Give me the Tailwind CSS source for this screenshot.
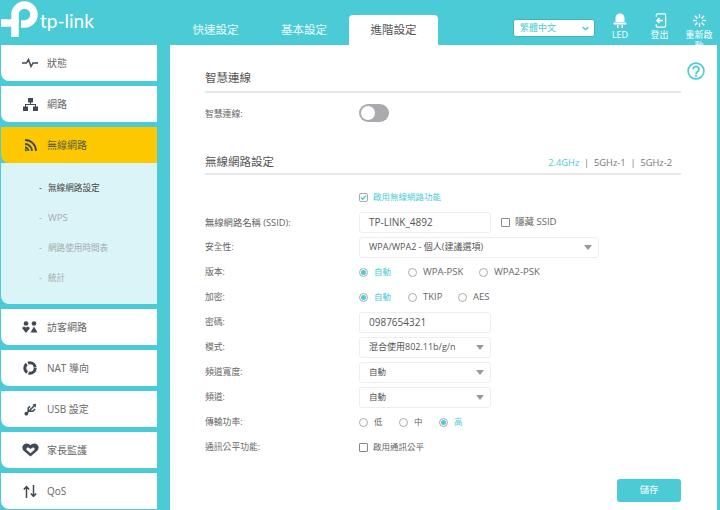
<!DOCTYPE html>
<html lang="zh-Hant">
<head>
  <meta charset="UTF-8"/>
  <title>TP-Link</title>
  <script src="https://cdn.jsdelivr.net/npm/@tailwindcss/browser@4"></script>
</head>
<body class="w-[720px] h-[510px] overflow-hidden bg-[#4acbd6] text-[#666] font-['Open_Sans','Noto_Sans_CJK_TC',sans-serif] text-[8.8px]">
  <!-- top bar -->
  <header class="h-[45px] flex relative">
    <div class="w-[172px] flex items-start pt-[1px] pl-[1px] text-white">
      <svg viewBox="0 0 38 37" class="w-[38px] h-[37px] shrink-0" fill="none" stroke="#fff" stroke-width="7.5">
        <path d="M0 22H14V36"/>
        <path d="M14 22V13.5A9.500 9.500 0 1 1 23.500 23H20"/>
      </svg>
      <span class="ml-[1px] mt-[8px] text-[19px] leading-[24px] font-['Lato',sans-serif]">tp-link</span>
    </div>
    <nav class="flex items-end text-[11.500px]">
      <a class="w-[87px] h-[30px] flex items-center justify-center text-white/90">快速設定</a>
      <a class="w-[90px] h-[30px] flex items-center justify-center text-white/90">基本設定</a>
      <a class="w-[89px] h-[30px] flex items-center justify-center bg-white rounded-t-[4px] text-[#555]">進階設定</a>
    </nav>
    <div class="ml-[75px] mt-[19px] w-[82px] h-[18px] bg-white rounded-[3px] border border-[#3fb4bf] flex items-center justify-between pl-[6px] pr-[5px] text-[#4acbd6] text-[9px]">
      繁體中文
      <svg viewBox="0 0 10 6" class="w-[7px] h-[5px]" fill="none" stroke="#4acbd6" stroke-width="2"><path d="M1 1l4 3.500L9 1"/></svg>
    </div>
    <div class="flex ml-[5px] text-white text-[9px] leading-[11px] text-center">
      <div class="w-[40px] flex flex-col items-center pt-[12px]">
        <svg viewBox="0 0 14 16" class="w-[14px] h-[16px] shrink-0" fill="#fff"><path d="M2.500 10V6a4.500 4.500 0 0 1 9 0v4zM0.500 10.500h13v2h-13zM4 13h1.500v3H4zM8.500 13H10v3H8.500z"/></svg>
        <span class="mt-[1px]">LED</span>
      </div>
      <div class="w-[39px] flex flex-col items-center pt-[13px]">
        <svg viewBox="0 0 14 16" class="w-[14px] h-[15px] shrink-0" fill="none" stroke="#fff" stroke-width="1.400"><path d="M3 4V2.500A1.500 1.500 0 0 1 4.500 1h7.500A1.500 1.500 0 0 1 13 2.500v11a1.500 1.500 0 0 1-1.500 1.500H4.500A1.500 1.500 0 0 1 3 13.500V12"/><path d="M10 8H4M6.500 5.500L4 8l2.500 2.500" stroke-width="1.800"/></svg>
        <span class="mt-[1px]">登出</span>
      </div>
      <div class="w-[40px] flex flex-col items-center pt-[13px]">
        <svg viewBox="0 0 16 16" class="w-[15px] h-[15px] shrink-0" fill="none" stroke="#fff" stroke-width="1.500"><path d="M8 1v4M8 11v4M1 8h4M11 8h4M3 3l2.800 2.800M10.200 10.200L13 13M13 3l-2.800 2.800M5.800 10.200L3 13"/></svg>
        <span class="mt-[1px] w-[28px]">重新啟動</span>
      </div>
    </div>
  </header>

  <div class="flex h-[465px] relative">
    <!-- side menu -->
    <aside class="w-[170px] pl-[1px] flex flex-col gap-[5px] text-[10px]">
      <a class="w-[156px] h-[36px] shrink-0 bg-white rounded-bl-[8px] flex items-center">
        <svg viewBox="0 0 16 10" class="w-[16px] h-[10px] ml-[21px] mr-[9px]" fill="none" stroke="#414a52" stroke-width="1.500"><path d="M0 5h4.500l2-3.500 2.500 7 2-3.500H16"/></svg>狀態
      </a>
      <a class="w-[156px] h-[36px] shrink-0 bg-white rounded-bl-[8px] flex items-center">
        <svg viewBox="0 0 15 13" class="w-[15px] h-[13px] ml-[22px] mr-[9px]" fill="#414a52"><path d="M5 0h5v4.500H5zM0 8.500h5V13H0zM10 8.500h5V13h-5z"/><path d="M7 4h1v2h5v3h-1V7H3v2H2V6h5z"/></svg>網路
      </a>
      <div class="w-[156px] shrink-0">
        <a class="h-[36px] bg-[#fdc800] rounded-bl-[8px] flex items-center text-[#5b5b45]">
          <svg viewBox="0 0 13 13" class="w-[13px] h-[13px] ml-[23px] mr-[10px]" fill="none" stroke="#414a52" stroke-width="1.800"><path d="M1 1a11 11 0 0 1 11 11M1 5a7 7 0 0 1 7 7"/><path d="M1 8.500a3.500 3.500 0 0 1 3.500 3.500"/><circle cx="1.800" cy="11.200" r="1" fill="#414a52" stroke="none"/></svg>無線網路
        </a>
        <ul class="h-[141px] bg-[#dbf4f7] rounded-bl-[8px] pt-[10px] pl-[38px] text-[8.600px] text-[#a3adb0]">
          <li class="h-[30px] flex items-center text-[#444]"><span class="w-[9px]">-</span>無線網路設定</li>
          <li class="h-[30px] flex items-center text-[9.500px]"><span class="w-[9px]">-</span>WPS</li>
          <li class="h-[30px] flex items-center"><span class="w-[9px]">-</span>網路使用時間表</li>
          <li class="h-[30px] flex items-center"><span class="w-[9px]">-</span>統計</li>
        </ul>
      </div>
      <a class="w-[156px] h-[36px] shrink-0 bg-white rounded-bl-[8px] flex items-center">
        <svg viewBox="0 0 16 12" class="w-[16px] h-[12px] ml-[21px] mr-[9px]" fill="#414a52"><circle cx="4" cy="2.500" r="2.300"/><circle cx="12" cy="2.500" r="2.300"/><path d="M0 7l2-1.500 2 1 2-1 2 1.500-4 5zM8.500 11.500L12 5.500l3.500 6z"/></svg>訪客網路
      </a>
      <a class="w-[156px] h-[36px] shrink-0 bg-white rounded-bl-[8px] flex items-center">
        <svg viewBox="0 0 14 14" class="w-[14px] h-[14px] ml-[22px] mr-[10px]" fill="none" stroke="#414a52" stroke-width="3"><circle cx="7" cy="7" r="5.200" stroke-dasharray="9.500 1.400"/></svg>NAT 導向
      </a>
      <a class="w-[156px] h-[36px] shrink-0 bg-white rounded-bl-[8px] flex items-center">
        <svg viewBox="0 0 14 14" class="w-[13px] h-[13px] ml-[23px] mr-[10px]" fill="none" stroke="#414a52" stroke-width="1.600"><path d="M2 12L11 3M5 9H9.500L12 6.500M4.500 9.500V5.500L6.500 3.500"/><circle cx="2.500" cy="11.500" r="2" fill="#414a52" stroke="none"/><path d="M9 1.500L13 .8 12.500 5z" fill="#414a52" stroke="none"/></svg>USB 設定
      </a>
      <a class="w-[156px] h-[36px] shrink-0 bg-white rounded-bl-[8px] flex items-center">
        <svg viewBox="0 0 18 14" class="w-[17px] h-[14px] ml-[21px] mr-[8px]" fill="#414a52"><path fill-rule="evenodd" d="M9 14L1.500 7.500C-1.500 3.500 2 0 5 0c1.500 0 3 .8 4 2 1-1.200 2.500-2 4-2 3 0 6.500 3.500 3.500 7.500zM9 10.500l4-3.500c1-1.500-.5-3-2-2.500L9 6 7 4.500c-1.500-.5-3 1-2 2.500z"/></svg>家長監護
      </a>
      <a class="w-[156px] h-[36px] shrink-0 bg-white rounded-bl-[8px] flex items-center">
        <svg viewBox="0 0 14 13" class="w-[14px] h-[13px] ml-[22px] mr-[10px]" fill="none" stroke="#414a52" stroke-width="1.500"><path d="M3.500 13V2M.8 4.500l2.700-3 2.700 3M10.500 0v11M7.800 8.500l2.700 3 2.700-3"/></svg>QoS
      </a>
    </aside>

    <!-- main panel -->
    <main class="w-[547px] h-[465px] bg-white pl-[35px] pr-[36px] relative z-10">
      <svg viewBox="0 0 20 20" class="absolute right-[12px] top-[17px] w-[18px] h-[18px]" fill="none" stroke="#4acbd6" stroke-width="1.800"><circle cx="10" cy="10" r="8.800"/><path d="M6.800 8a3.200 3.200 0 1 1 4.800 2.800c-1 .6-1.600 1.200-1.600 2.400" stroke-width="2"/><circle cx="10" cy="15.500" r="1.200" fill="#4acbd6" stroke="none"/></svg>

      <h2 class="h-[48px] pt-[25px] border-b-2 border-[#e8e8e8] text-[11.500px] leading-[16px] text-[#555]">智慧連線</h2>
      <div class="h-[42px] flex items-center">
        <label class="w-[154px] pt-[2px]">智慧連線:</label>
        <span class="w-[30px] h-[18px] rounded-full bg-[#ababaf] p-[2px] mt-[-2px]"><span class="block w-[14px] h-[14px] rounded-full bg-white"></span></span>
      </div>

      <div class="h-[40px] pt-[19px] border-b-2 border-[#e8e8e8] flex justify-between text-[#777]">
        <h2 class="text-[11.500px] leading-[16px] text-[#555]">無線網路設定</h2>
        <p class="leading-[16px] pt-[1px] pr-[9px] text-[9.300px] whitespace-pre"><span class="text-[#4acbd6]">2.4GHz</span>  |  5GHz-1  |  5GHz-2</p>
      </div>

      <div class="flex flex-col">
        <div class="h-[34.500px] pt-[10px] pl-[154px] flex items-center text-[#4acbd6] text-[8.500px]">
          <span class="w-[9px] h-[9px] rounded-[2px] border border-[#aaa] mr-[5px] flex items-center justify-center"><svg viewBox="0 0 8 8" class="w-[7px] h-[7px]" fill="none" stroke="#4acbd6" stroke-width="1.500"><path d="M1 4l2 2 4-4"/></svg></span>啟用無線網路功能
        </div>
        <div class="h-[25px] flex items-center">
          <label class="w-[154px] pt-[2px] text-[9.300px]">無線網路名稱 (SSID):</label>
          <span class="w-[132px] h-[21px] border border-[#eee] rounded-[3px] pl-[9px] flex items-center text-[#555] text-[10px]">TP-LINK_4892</span>
          <span class="w-[9px] h-[9px] rounded-[1px] border border-[#888] ml-[10px] mr-[5px]"></span><span class="text-[9.500px]">隱藏 SSID</span>
        </div>
        <div class="h-[25px] flex items-center">
          <label class="w-[154px] pt-[2px]">安全性:</label>
          <span class="w-[240px] h-[21px] border border-[#eee] rounded-[3px] pl-[9px] pr-[6px] flex items-center justify-between text-[#555] text-[9px]">WPA/WPA2 - 個人(建議選項)<i class="border-x-[4px] border-t-[5px] border-x-transparent border-t-[#999]"></i></span>
        </div>
        <div class="h-[25px] flex items-center">
          <label class="w-[154px] pt-[2px]">版本:</label>
          <span class="w-[9px] h-[9px] rounded-full border border-[#aaa] p-[1px] mr-[6px]"><i class="block w-full h-full rounded-full bg-[#4acbd6]"></i></span><span class="w-[34px] text-[#4acbd6] text-[8.500px]">自動</span>
          <span class="w-[9px] h-[9px] rounded-full border border-[#aaa] mr-[6px]"></span><span class="w-[56px] text-[9.500px]">WPA-PSK</span>
          <span class="w-[9px] h-[9px] rounded-full border border-[#aaa] mr-[6px]"></span><span class="text-[9.500px]">WPA2-PSK</span>
        </div>
        <div class="h-[25px] flex items-center">
          <label class="w-[154px] pt-[2px]">加密:</label>
          <span class="w-[9px] h-[9px] rounded-full border border-[#aaa] p-[1px] mr-[6px]"><i class="block w-full h-full rounded-full bg-[#4acbd6]"></i></span><span class="w-[34px] text-[#4acbd6] text-[8.500px]">自動</span>
          <span class="w-[9px] h-[9px] rounded-full border border-[#aaa] mr-[6px]"></span><span class="w-[35px] text-[9.500px]">TKIP</span>
          <span class="w-[9px] h-[9px] rounded-full border border-[#aaa] mr-[6px]"></span><span class="text-[9.500px]">AES</span>
        </div>
        <div class="h-[25px] flex items-center">
          <label class="w-[154px] pt-[2px]">密碼:</label>
          <span class="w-[132px] h-[21px] border border-[#eee] rounded-[3px] pl-[9px] flex items-center text-[#555] text-[10px]">0987654321</span>
        </div>
        <div class="h-[25px] flex items-center">
          <label class="w-[154px] pt-[2px]">模式:</label>
          <span class="w-[132px] h-[21px] border border-[#eee] rounded-[3px] pl-[9px] pr-[6px] flex items-center justify-between text-[#555] text-[9px]">混合使用802.11b/g/n<i class="border-x-[4px] border-t-[5px] border-x-transparent border-t-[#999]"></i></span>
        </div>
        <div class="h-[25px] flex items-center">
          <label class="w-[154px] pt-[2px]">頻道寬度:</label>
          <span class="w-[132px] h-[21px] border border-[#eee] rounded-[3px] pl-[9px] pr-[6px] flex items-center justify-between text-[#555] text-[8.500px]">自動<i class="border-x-[4px] border-t-[5px] border-x-transparent border-t-[#999]"></i></span>
        </div>
        <div class="h-[25px] flex items-center">
          <label class="w-[154px] pt-[2px]">頻道:</label>
          <span class="w-[132px] h-[21px] border border-[#eee] rounded-[3px] pl-[9px] pr-[6px] flex items-center justify-between text-[#555] text-[8.500px]">自動<i class="border-x-[4px] border-t-[5px] border-x-transparent border-t-[#999]"></i></span>
        </div>
        <div class="h-[25px] flex items-center">
          <label class="w-[154px] pt-[2px]">傳輸功率:</label>
          <span class="w-[9px] h-[9px] rounded-full border border-[#aaa] mr-[6px]"></span><span class="w-[25px] text-[8.500px]">低</span>
          <span class="w-[9px] h-[9px] rounded-full border border-[#aaa] mr-[6px]"></span><span class="w-[25px] text-[8.500px]">中</span>
          <span class="w-[9px] h-[9px] rounded-full border border-[#aaa] p-[1px] mr-[6px]"><i class="block w-full h-full rounded-full bg-[#4acbd6]"></i></span><span class="text-[#4acbd6] text-[8.500px]">高</span>
        </div>
        <div class="h-[25px] flex items-center">
          <label class="w-[154px] pt-[2px]">通訊公平功能:</label>
          <span class="w-[9px] h-[9px] rounded-[1px] border border-[#888] mr-[5px]"></span><span class="text-[8.500px]">啟用通訊公平</span>
        </div>
      </div>
      <div class="flex justify-end mt-[19px]">
        <button class="w-[64px] h-[23px] rounded-[3px] bg-[#4acbd6] text-white text-[9.500px]">儲存</button>
      </div>
    </main>
  </div>
</body>
</html>
